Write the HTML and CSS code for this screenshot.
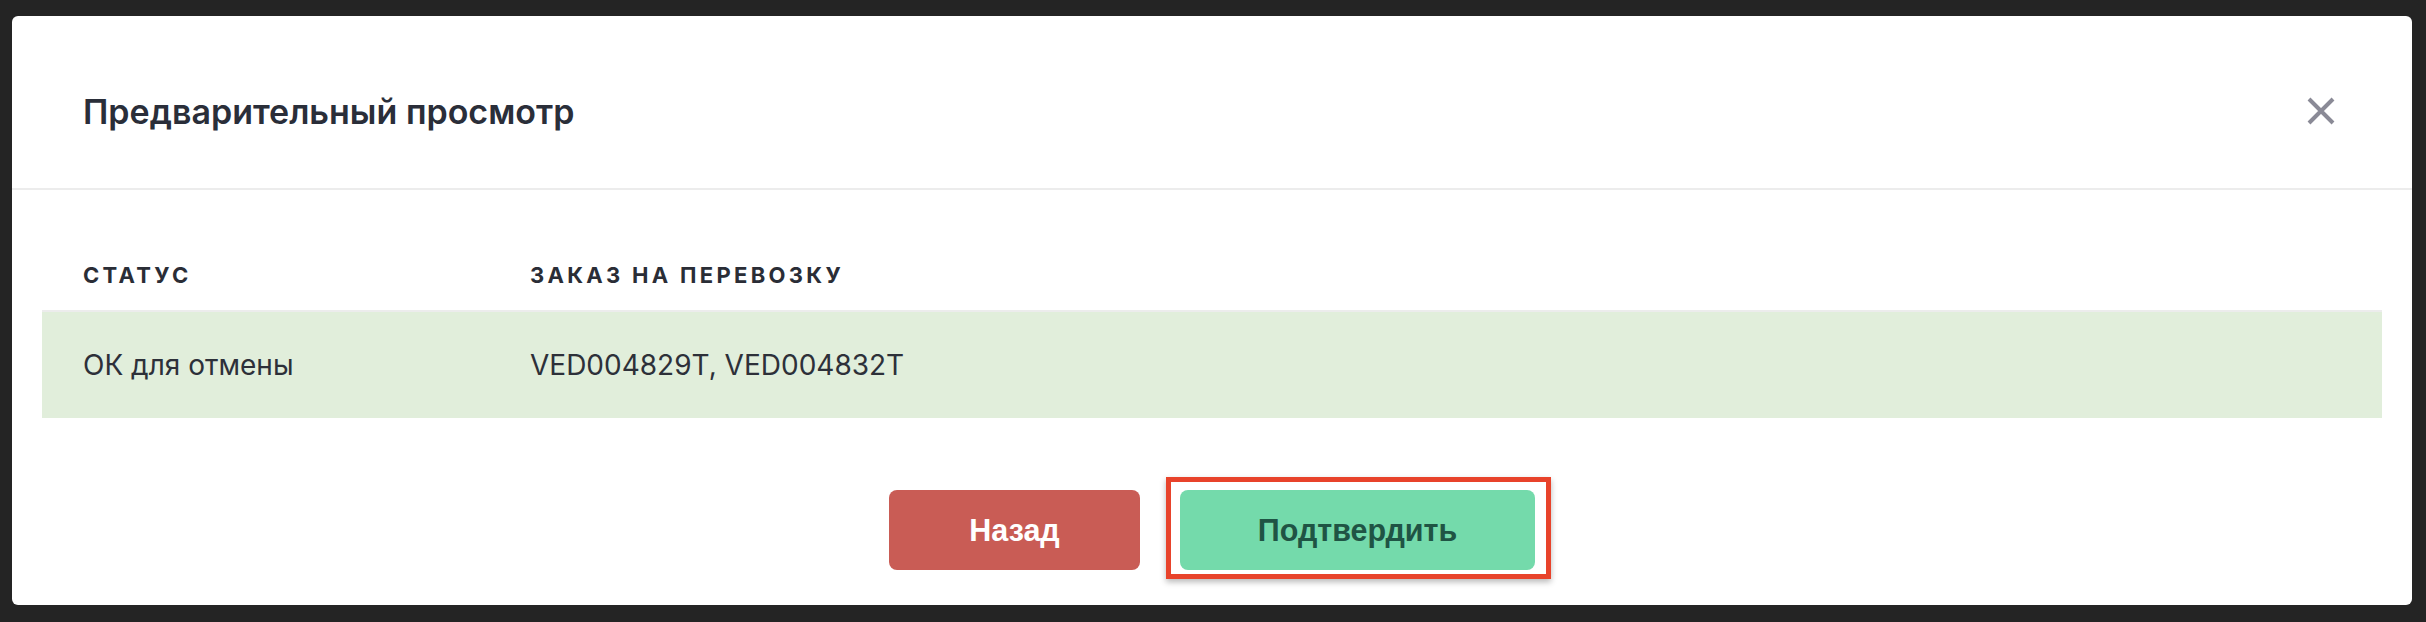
FILE: index.html
```html
<!DOCTYPE html>
<html lang="ru">
<head>
<meta charset="utf-8">
<title>Предварительный просмотр</title>
<link rel="stylesheet" href="styles.css">
</head>
<body>
<div class="modal">
  <div class="modal-header">
    <h2 class="modal-title">Предварительный просмотр</h2>
    <button class="close" aria-label="Закрыть">
      <svg viewBox="0 0 28 28" width="28" height="28"><path d="M2 2 L26 26 M26 2 L2 26" stroke="#8a8a96" stroke-width="4" stroke-linecap="butt"/></svg>
    </button>
  </div>
  <div class="modal-body">
    <div class="grid head">
      <div class="cell">Статус</div>
      <div class="cell">Заказ на перевозку</div>
    </div>
    <div class="grid row ok">
      <div class="cell">ОК для отмены</div>
      <div class="cell">VED004829T, VED004832T</div>
    </div>
  </div>
  <div class="modal-footer">
    <button class="btn btn-back">Назад</button>
    <div class="highlight-wrap">
      <button class="btn btn-confirm">Подтвердить</button>
      <span class="highlight"></span>
    </div>
  </div>
</div>
</body>
</html>
```

FILE: styles.css
```css
html, body {
  margin: 0;
  padding: 0;
}
body {
  background: #242424;
  width: 2426px;
  height: 622px;
  overflow: hidden;
  font-family: Inter, "Noto Sans", sans-serif;
  color: #2b2e37;
}
.modal {
  margin: 16px 0 0 12px;
  width: 2400px;
  height: 589px;
  background: #ffffff;
  border-radius: 6px;
  display: flex;
  flex-direction: column;
}
.modal-header {
  box-sizing: border-box;
  height: 174px;
  padding: 18px 77px 0 71px;
  display: flex;
  align-items: center;
  justify-content: space-between;
  border-bottom: 2px solid #ececec;
}
.modal-title {
  margin: 0;
  font-size: 34px;
  font-weight: 600;
  color: #2a2e39;
  letter-spacing: 0;
}
.close {
  border: 0;
  background: none;
  padding: 0;
  width: 28px;
  height: 28px;
  display: flex;
}
.modal-body {
  padding: 50px 30px 0 30px;
}
.grid {
  display: grid;
  grid-template-columns: 447px 1fr;
}
.cell {
  padding-left: 41px;
  display: flex;
  align-items: center;
}
.head {
  height: 70px;
  font-size: 22px;
  font-weight: 700;
  letter-spacing: 3.3px;
  text-transform: uppercase;
  color: #2a2d36;
}
.row {
  border-top: 2px solid #ececec;
  height: 106px;
  font-size: 28px;
  font-weight: 400;
  color: #2d3039;
}
.ok {
  background: #e1eedb;
}
.modal-footer {
  display: flex;
  justify-content: center;
  gap: 40px;
  padding-top: 72px;
}
.btn {
  border: 0;
  height: 80px;
  border-radius: 8px;
  font-family: "Liberation Sans", Arial, sans-serif;
  font-weight: 700;
  font-size: 30.5px;
  padding: 0;
}
.btn-back {
  width: 251px;
  background: #c95c55;
  color: #ffffff;
}
.highlight-wrap {
  position: relative;
  display: flex;
}
.btn-confirm {
  width: 355px;
  background: #74daab;
  color: #1f5444;
}
.highlight {
  position: absolute;
  left: -14px;
  right: -16px;
  top: -13px;
  bottom: -9px;
  border: 5px solid #e8432b;
  box-shadow: 0 3px 6px rgba(0, 0, 0, 0.28);
  pointer-events: none;
}
```
